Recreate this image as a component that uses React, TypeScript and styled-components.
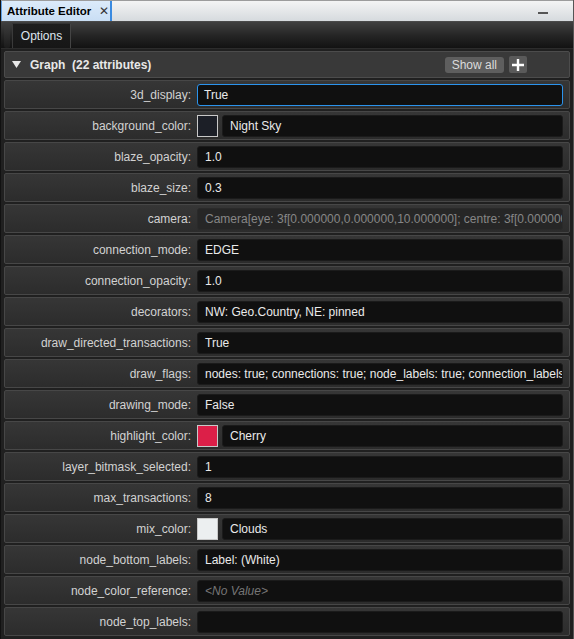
import React from "react";
import styled, { createGlobalStyle, css } from "styled-components";

const Global = createGlobalStyle`
  html, body { margin: 0; padding: 0; background: #1f1f1f; }
  body { font-family: "Liberation Sans", Arial, sans-serif; font-size: 12px; }
  * { box-sizing: border-box; }
`;

const Frame = styled.div`
  width: 574px;
  height: 639px;
  overflow: hidden;
  display: flex;
  flex-direction: column;
  background: #202020;
  border-left: 1px solid #111;
  border-right: 1px solid #555;
`;

const TitleBar = styled.div`
  height: 22px;
  flex: none;
  display: flex;
  align-items: stretch;
  background: linear-gradient(#f4f4f4, #d6dade);
  border-top: 1px solid #9c9c9c;
  border-bottom: 1px solid #4a4a4a;
`;

const TitleTab = styled.div`
  width: 111px;
  display: flex;
  align-items: center;
  gap: 8px;
  padding-left: 5px;
  background: linear-gradient(#dcebfa, #c9def4);
  border-left: 1px solid #5f9fe3;
  border-right: 2px solid #3a8ae0;
  color: #000;
  font-weight: bold;
  font-size: 11.5px;
  white-space: nowrap;
`;

const CloseX = styled.span`
  font-weight: normal;
  font-size: 12px;
  color: #333;
`;

const Spacer = styled.div`
  flex: 1;
`;

const Minimize = styled.div`
  width: 10px;
  height: 2px;
  background: #555;
  align-self: center;
  margin: 3px 25px 0 0;
`;

const Toolbar = styled.div`
  height: 27px;
  flex: none;
  display: flex;
  align-items: flex-end;
  padding-left: 3px;
  background: linear-gradient(#404040, #262626 50%, #121212);
  border-bottom: 1px solid #2c2c2c;
`;

const Grip = styled.div`
  width: 6px;
  height: 23px;
  margin-right: 2px;
  border-radius: 2px;
  background: linear-gradient(#3a3a3a, #1c1c1c);
`;

const OptionsTab = styled.div`
  height: 25px;
  width: 59px;
  display: flex;
  align-items: center;
  justify-content: center;
  color: #dfe6ee;
  font-size: 12px;
  background: linear-gradient(#1e1e1e, #161616);
  border-left: 1px solid #3a3a3a;
  border-right: 1px solid #444;
  border-top: 1px solid #333;
`;

const Content = styled.div`
  flex: 1;
  display: flex;
  flex-direction: column;
  gap: 2px;
  padding: 2px 3px 0 3px;
`;

const Header = styled.div`
  height: 27px;
  flex: none;
  display: flex;
  align-items: center;
  padding: 0 0 0 7px;
  background: #393939;
  border: 1px solid #4c4c4c;
  border-radius: 2px;
`;

const Triangle = styled.svg`
  width: 9px;
  height: 7px;
  margin-right: 9px;
`;

const HeaderTitle = styled.span`
  color: #e8e8e8;
  font-weight: bold;
  font-size: 12px;
  white-space: pre;
`;

const ShowAll = styled.div`
  height: 16px;
  padding: 0 7px;
  display: flex;
  align-items: center;
  border-radius: 3px;
  background: #5e5e5e;
  color: #dcdcdc;
  font-size: 12px;
  margin-right: 5px;
`;

const PlusBtn = styled.div`
  width: 18px;
  height: 17px;
  border-radius: 2px;
  background: #5a5a5a;
  display: flex;
  align-items: center;
  justify-content: center;
  margin-right: 42px;
`;

const Row = styled.div`
  height: 29px;
  flex: none;
  display: flex;
  align-items: center;
  gap: 6px;
  padding-right: 6px;
  background: linear-gradient(#363636, #2c2c2c);
  border: 1px solid #474747;
  border-radius: 2px;
`;

const Label = styled.div`
  width: 186px;
  flex: none;
  text-align: right;
  color: #d2d2d2;
  font-size: 12px;
  white-space: nowrap;
`;

const ValueGroup = styled.div`
  flex: 1;
  min-width: 0;
  display: flex;
  gap: 4px;
`;

const Swatch = styled.div<{ $color: string }>`
  width: 21px;
  height: 22px;
  flex: none;
  background: ${(p) => p.$color};
  border: 1px solid #c8c8c8;
`;

const Field = styled.div<{ $focused?: boolean; $disabled?: boolean; $empty?: boolean }>`
  flex: 1;
  min-width: 0;
  height: 22px;
  display: flex;
  align-items: center;
  padding-left: 7px;
  border-radius: 3px;
  background: #101010;
  border: 1px solid #1b1b1b;
  color: #eaeaea;
  font-size: 12px;
  white-space: nowrap;
  overflow: hidden;
  ${(p) =>
    p.$focused &&
    css`
      border: 1.5px solid #2b93ec;
      padding-left: 6px;
    `}
  ${(p) =>
    p.$disabled &&
    css`
      background: #262626;
      border-color: #2a2a2a;
      color: #878787;
    `}
  ${(p) =>
    p.$empty &&
    css`
      color: #767676;
      font-style: italic;
    `}
`;

type Attr = {
  name: string;
  value: string;
  swatch?: string;
  focused?: boolean;
  disabled?: boolean;
  empty?: boolean;
};

const attrs: Attr[] = [
  { name: "3d_display", value: "True", focused: true },
  { name: "background_color", value: "Night Sky", swatch: "#1c1f27" },
  { name: "blaze_opacity", value: "1.0" },
  { name: "blaze_size", value: "0.3" },
  {
    name: "camera",
    value: "Camera[eye: 3f[0.000000,0.000000,10.000000]; centre: 3f[0.000000,0.000000,0.000000]",
    disabled: true,
  },
  { name: "connection_mode", value: "EDGE" },
  { name: "connection_opacity", value: "1.0" },
  { name: "decorators", value: "NW: Geo.Country, NE: pinned" },
  { name: "draw_directed_transactions", value: "True" },
  {
    name: "draw_flags",
    value: "nodes: true; connections: true; node_labels: true; connection_labels: true",
  },
  { name: "drawing_mode", value: "False" },
  { name: "highlight_color", value: "Cherry", swatch: "#dc1f48" },
  { name: "layer_bitmask_selected", value: "1" },
  { name: "max_transactions", value: "8" },
  { name: "mix_color", value: "Clouds", swatch: "#eceff0" },
  { name: "node_bottom_labels", value: "Label: (White)" },
  { name: "node_color_reference", value: "<No Value>", empty: true },
  { name: "node_top_labels", value: "" },
];

export default function App() {
  return (
    <>
      <Global />
      <Frame>
        <TitleBar>
          <TitleTab>
            Attribute Editor <CloseX>✕</CloseX>
          </TitleTab>
          <Spacer />
          <Minimize />
        </TitleBar>
        <Toolbar>
          <Grip />
          <OptionsTab>Options</OptionsTab>
        </Toolbar>
        <Content>
          <Header>
            <Triangle viewBox="0 0 9 7">
              <path d="M0 0 H9 L4.5 7 Z" fill="#e8e8e8" />
            </Triangle>
            <HeaderTitle>Graph  (22 attributes)</HeaderTitle>
            <Spacer />
            <ShowAll>Show all</ShowAll>
            <PlusBtn>
              <svg width="12" height="12" viewBox="0 0 12 12">
                <path d="M6 0 V12 M0 6 H12" stroke="#fff" strokeWidth="2.4" />
              </svg>
            </PlusBtn>
          </Header>
          {attrs.map((a) => (
            <Row key={a.name}>
              <Label>{a.name}:</Label>
              <ValueGroup>
                {a.swatch && <Swatch $color={a.swatch} />}
                <Field $focused={a.focused} $disabled={a.disabled} $empty={a.empty}>
                  {a.value}
                </Field>
              </ValueGroup>
            </Row>
          ))}
        </Content>
      </Frame>
    </>
  );
}
